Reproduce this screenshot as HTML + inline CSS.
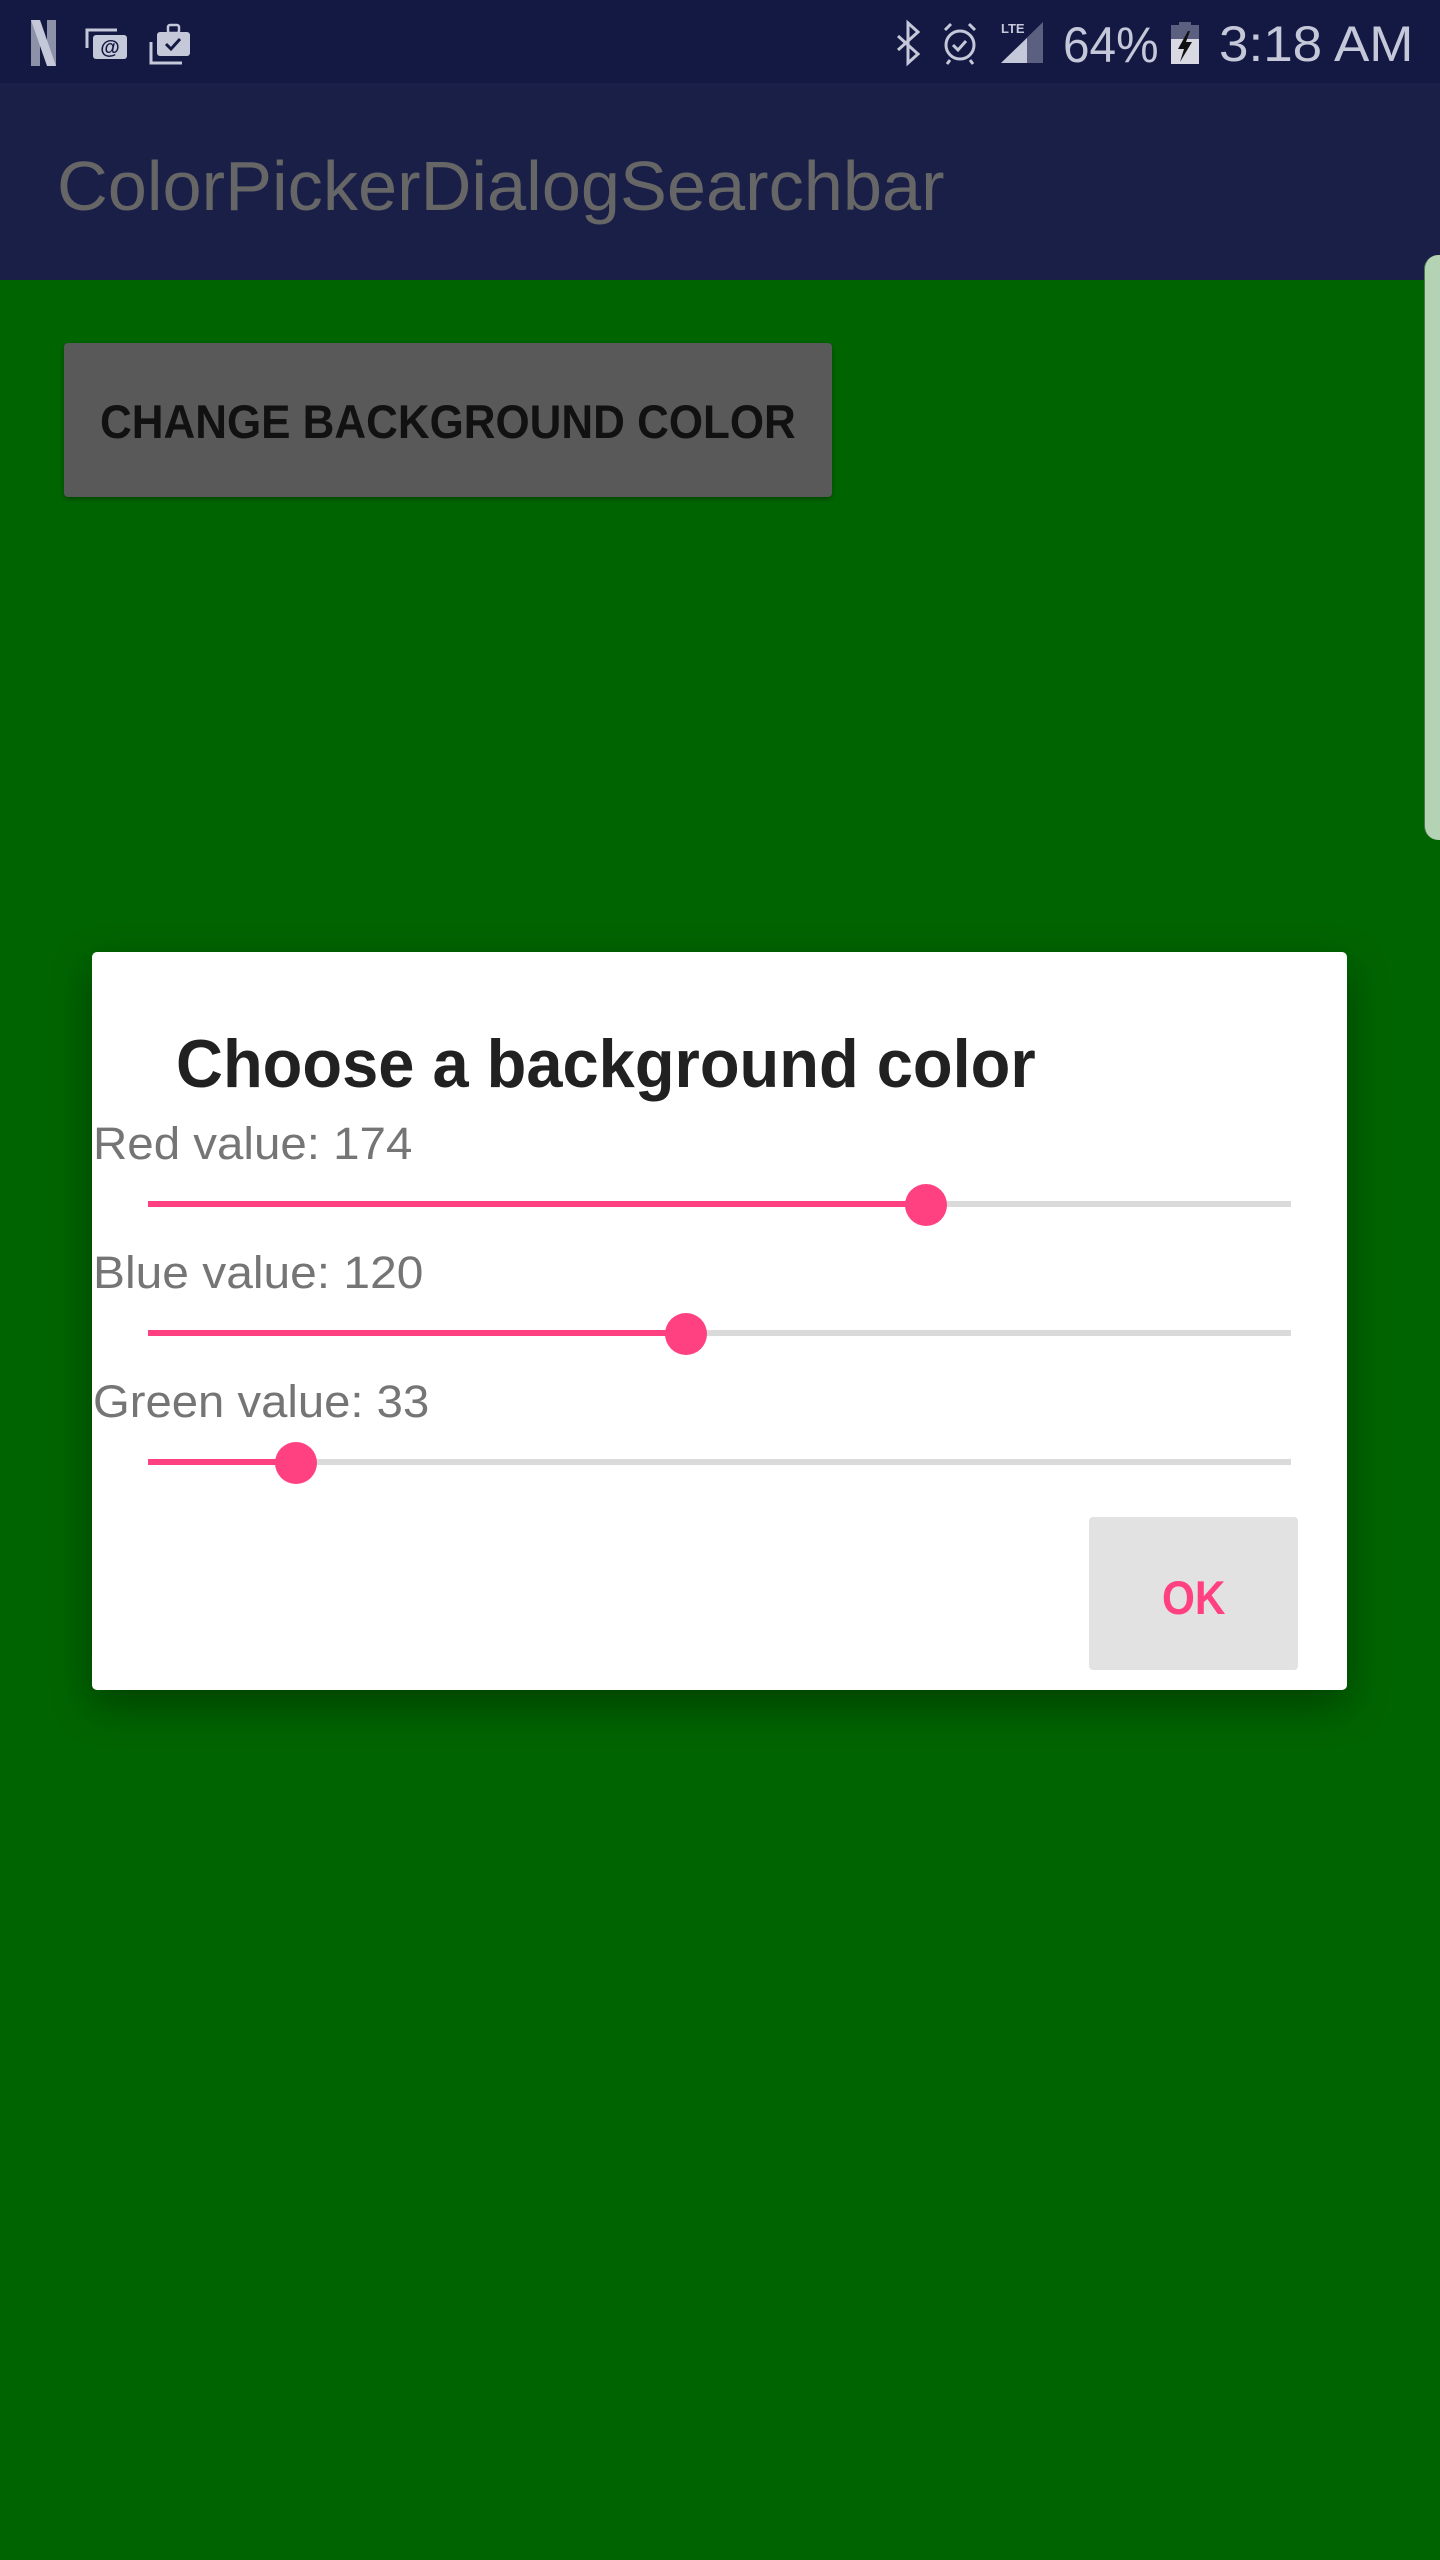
<!DOCTYPE html>
<html><head><meta charset="utf-8"><style>
*{margin:0;padding:0;box-sizing:border-box}
body{width:1440px;height:2560px;background:#006400;position:relative;overflow:hidden;font-family:"Liberation Sans",sans-serif}
.abs{position:absolute}
.t{position:absolute;white-space:nowrap;transform-origin:0 0}
</style></head><body>
<div class="abs" style="left:0;top:0;width:1440px;height:83px;background:#141944"></div>
<div class="abs" style="left:0;top:83px;width:1440px;height:197px;background:#1a1f48"></div>
<svg class="abs" style="left:0;top:0" width="220" height="84">
<rect x="31" y="20" width="9" height="46" fill="#8e92a8"/><rect x="47" y="20" width="9" height="46" fill="#8e92a8"/>
<polygon points="31,20 40,20 56,66 47,66" fill="#c5c8d8"/>
<path d="M87 48V30h30" stroke="#c5c8d8" stroke-width="3" fill="none"/>
<rect x="93" y="35" width="34" height="24" rx="3" fill="#c5c8d8"/>
<text x="110" y="54" font-size="20" font-weight="bold" fill="#141944" text-anchor="middle" font-family="Liberation Sans">@</text>
<path d="M151 42v21h31" stroke="#c5c8d8" stroke-width="3" fill="none"/>
<rect x="157" y="32" width="33" height="24" rx="3" fill="#c5c8d8"/>
<rect x="168" y="25" width="11" height="8" rx="2" fill="none" stroke="#c5c8d8" stroke-width="2.5"/>
<path d="M166 44l5 5 9-10" stroke="#141944" stroke-width="3" fill="none"/>
</svg>
<svg class="abs" style="left:880px;top:0" width="330" height="84">
<path d="M18 36l20 18-10 9V23l10 9-20 18" stroke="#c5c8d8" stroke-width="3" fill="none"/>
<circle cx="80" cy="45" r="14" fill="none" stroke="#c5c8d8" stroke-width="3"/>
<path d="M65 30l6-6M95 30l-6-6M70 60l-3 4M90 60l3 4" stroke="#c5c8d8" stroke-width="3"/>
<path d="M73 45l5 5 8-9" stroke="#c5c8d8" stroke-width="3" fill="none"/>
<text x="121" y="33" font-size="13" font-weight="bold" fill="#c5c8d8" font-family="Liberation Sans">LTE</text>
<polygon points="121,63 163,22 163,63" fill="#5c6080"/>
<polygon points="121,63 147,38 147,63" fill="#c5c8d8"/>
</svg>
<div class="t" style="left:1063px;top:16px;font-size:50px;color:#c5c8d8;transform:scaleX(0.955)">64%</div>
<svg class="abs" style="left:1170px;top:22px" width="30" height="42">
<rect x="9" y="0" width="12" height="4" fill="#5c6080"/>
<rect x="1" y="3" width="28" height="39" fill="#d8d9e2"/>
<rect x="1" y="3" width="28" height="14" fill="#5c6080"/>
<polygon points="18,9 8,27 14,27 10,40 22,20 16,20 20,9" fill="#111"/>
</svg>
<div class="t" style="left:1219px;top:15px;font-size:50px;color:#c5c8d8;transform:scaleX(1.06)">3:18 AM</div>
<div class="t" style="left:57px;top:146px;font-size:70px;color:#666;transform:scaleX(1.005)">ColorPickerDialogSearchbar</div>
<div class="abs" style="left:1424px;top:255px;width:30px;height:585px;background:#b4d3b4;border-radius:14px;border-left:1px solid #4a7a4a"></div>
<div class="abs" style="left:64px;top:343px;width:768px;height:154px;background:#595959;border-radius:4px;box-shadow:0 2px 4px rgba(0,0,0,.3)"></div>
<div class="t" style="left:100px;top:394px;font-size:47px;font-weight:bold;color:#111;transform:scaleX(0.935)">CHANGE BACKGROUND COLOR</div>
<div class="abs" style="left:92px;top:952px;width:1255px;height:738px;background:#fff;border-radius:5px;box-shadow:0 15px 40px rgba(0,0,0,.35)"></div>
<div class="t" style="left:176px;top:1025px;font-size:68px;font-weight:bold;color:#212121;transform:scaleX(0.956)">Choose a background color</div>
<div class="t" style="left:93px;top:1118px;font-size:45px;color:#757575;transform:scaleX(1.055)">Red value: 174</div>
<div class="t" style="left:93px;top:1247px;font-size:45px;color:#757575;transform:scaleX(1.065)">Blue value: 120</div>
<div class="t" style="left:93px;top:1376px;font-size:45px;color:#757575;transform:scaleX(1.05)">Green value: 33</div>
<svg class="abs" style="left:0;top:0" width="1440" height="1700">
<g stroke-width="6">
<line x1="148" y1="1204" x2="1291" y2="1204" stroke="#dadada"/><line x1="148" y1="1204" x2="926" y2="1204" stroke="#ff4081"/>
<line x1="148" y1="1333" x2="1291" y2="1333" stroke="#dadada"/><line x1="148" y1="1333" x2="686" y2="1333" stroke="#ff4081"/>
<line x1="148" y1="1462" x2="1291" y2="1462" stroke="#dadada"/><line x1="148" y1="1462" x2="296" y2="1462" stroke="#ff4081"/>
</g>
<circle cx="926" cy="1205" r="21" fill="#ff4081"/>
<circle cx="686" cy="1334" r="21" fill="#ff4081"/>
<circle cx="296" cy="1463" r="21" fill="#ff4081"/>
</svg>
<div class="abs" style="left:1089px;top:1517px;width:209px;height:153px;background:#e2e2e2;border-radius:4px"></div>
<div class="t" style="left:1162px;top:1570px;font-size:47px;font-weight:bold;color:#ff4081;transform:scaleX(0.9)">OK</div>
</body></html>
